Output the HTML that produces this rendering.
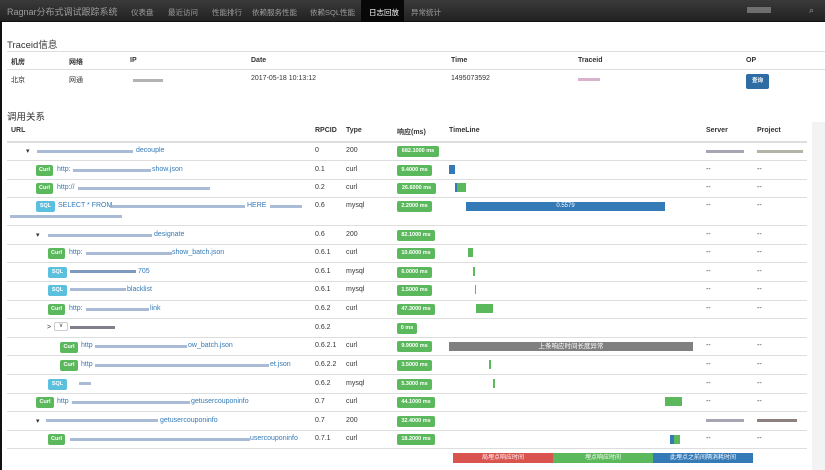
<!DOCTYPE html><html><head><meta charset="utf-8"><style>
*{margin:0;padding:0;box-sizing:border-box}
body{width:825px;height:470px;overflow:hidden;background:#fff;font-family:"Liberation Sans","Noto Sans CJK SC",sans-serif;font-size:7px;color:#333;position:relative}
.a{position:absolute;white-space:nowrap}
.nav{position:absolute;left:0;top:0;width:825px;height:22px;background:linear-gradient(#3a3a3a,#222);border-bottom:1px solid #111}
.nav .a{color:#9d9d9d;font-size:7.5px;top:7px}
.hl{position:absolute;height:1px;background:#ddd}
.b{position:absolute;color:#fff;font-weight:bold;font-size:5.5px;border-radius:2px;text-align:center;line-height:11px;height:11px}
.g{background:#5cb85c}.s{background:#5bc0de}
.bl{position:absolute;height:3px;background:#8ea4c8;opacity:.75}
.lk{color:#337ab7}
.bar{position:absolute;height:9px}
</style></head><body>
<div style="position:absolute;left:0;top:22px;width:2px;height:448px;background:#111"></div>
<div style="position:absolute;left:812px;top:122px;width:13px;height:348px;background:#f3f3f3"></div>
<div class="nav">
<div class="a" style="left:7px;top:5px;font-size:9px;color:#9d9d9d">Ragnar分布式调试跟踪系统</div>
<div class="a" style="left:131px">仪表盘</div>
<div class="a" style="left:168px">最近访问</div>
<div class="a" style="left:212px">性能排行</div>
<div class="a" style="left:252px">依赖服务性能</div>
<div class="a" style="left:310px">依赖SQL性能</div>
<div style="position:absolute;left:361px;top:0;width:43px;height:22px;background:#080808"></div>
<div class="a" style="left:369px;color:#fff">日志回放</div>
<div class="a" style="left:411px">异常统计</div>
<div style="position:absolute;left:747px;top:7px;width:24px;height:6px;background:#8a8a8a;opacity:.7"></div>
<div class="a" style="left:809px;top:5px;font-size:9px">⌕</div>
</div>

<div class="a" style="left:7px;top:37px;font-size:9.5px;color:#333">Traceid信息</div>
<div class="hl" style="left:7px;top:51px;width:818px"></div>
<div class="hl" style="left:7px;top:69px;width:818px"></div>
<div class="a" style="left:11px;top:57px;font-weight:bold">机房</div>
<div class="a" style="left:69px;top:57px;font-weight:bold">网络</div>
<div class="a" style="left:130px;top:57px;font-weight:bold">IP</div>
<div class="a" style="left:251px;top:57px;font-weight:bold">Date</div>
<div class="a" style="left:451px;top:57px;font-weight:bold">Time</div>
<div class="a" style="left:578px;top:57px;font-weight:bold">Traceid</div>
<div class="a" style="left:746px;top:57px;font-weight:bold">OP</div>
<div class="a" style="left:11px;top:75px">北京</div>
<div class="a" style="left:69px;top:75px">网通</div>
<div class="bl" style="left:133px;top:79px;width:30px;background:#999"></div>
<div class="a" style="left:251px;top:75px">2017-05-18 10:13:12</div>
<div class="a" style="left:451px;top:75px">1495073592</div>
<div class="bl" style="left:578px;top:78px;width:22px;background:#c9b"></div>
<div class="b" style="left:746px;top:74px;width:23px;height:15px;line-height:15px;background:#2e6da4">查询</div>

<div class="a" style="left:7px;top:109px;font-size:9.5px">调用关系</div>
<div class="a" style="left:11px;top:127px;font-weight:bold">URL</div>
<div class="a" style="left:315px;top:127px;font-weight:bold">RPCID</div>
<div class="a" style="left:346px;top:127px;font-weight:bold">Type</div>
<div class="a" style="left:397px;top:127px;font-weight:bold">响应(ms)</div>
<div class="a" style="left:449px;top:127px;font-weight:bold">TimeLine</div>
<div class="a" style="left:706px;top:127px;font-weight:bold">Server</div>
<div class="a" style="left:757px;top:127px;font-weight:bold">Project</div>
<div class="hl" style="left:7px;top:141px;width:800px;height:2px"></div>

<div class="hl" style="left:7px;top:160px;width:800px"></div>
<div class="hl" style="left:7px;top:179px;width:800px"></div>
<div class="hl" style="left:7px;top:197px;width:800px"></div>
<div class="hl" style="left:7px;top:225px;width:800px"></div>
<div class="hl" style="left:7px;top:244px;width:800px"></div>
<div class="hl" style="left:7px;top:262px;width:800px"></div>
<div class="hl" style="left:7px;top:281px;width:800px"></div>
<div class="hl" style="left:7px;top:300px;width:800px"></div>
<div class="hl" style="left:7px;top:318px;width:800px"></div>
<div class="hl" style="left:7px;top:337px;width:800px"></div>
<div class="hl" style="left:7px;top:355px;width:800px"></div>
<div class="hl" style="left:7px;top:374px;width:800px"></div>
<div class="hl" style="left:7px;top:393px;width:800px"></div>
<div class="hl" style="left:7px;top:411px;width:800px"></div>
<div class="hl" style="left:7px;top:430px;width:800px"></div>
<div class="hl" style="left:7px;top:448px;width:800px"></div>

<div class="a" style="left:26px;top:147px">▾</div><div class="bl" style="left:37px;top:150px;width:96px"></div><div class="a lk" style="left:136px;top:147px">decouple</div>
<div class="a" style="left:315px;top:147px">0</div><div class="a" style="left:346px;top:147px">200</div><div class="b g" style="left:397px;top:146px;width:42px">682.1000 ms</div>
<div class="bl" style="left:706px;top:150px;width:38px;background:#889"></div><div class="bl" style="left:757px;top:150px;width:46px;background:#998"></div>

<div class="b g" style="left:36px;top:165px;width:17px">Curl</div><div class="a lk" style="left:57px;top:166px">http:</div><div class="bl" style="left:73px;top:169px;width:78px"></div><div class="a lk" style="left:152px;top:166px">show.json</div>
<div class="a" style="left:315px;top:166px">0.1</div><div class="a" style="left:346px;top:166px">curl</div><div class="b g" style="left:397px;top:165px;width:35px">9.4000 ms</div>
<div class="bar" style="left:449px;top:165px;width:6px;background:#337ab7"></div>
<div class="a" style="left:706px;top:166px">--</div><div class="a" style="left:757px;top:166px">--</div>

<div class="b g" style="left:36px;top:183px;width:17px">Curl</div><div class="a lk" style="left:57px;top:184px">http://</div><div class="bl" style="left:78px;top:187px;width:132px"></div>
<div class="a" style="left:315px;top:184px">0.2</div><div class="a" style="left:346px;top:184px">curl</div><div class="b g" style="left:397px;top:183px;width:39px">26.6000 ms</div>
<div class="bar" style="left:455px;top:183px;width:2px;background:#337ab7"></div><div class="bar" style="left:457px;top:183px;width:9px;background:#5cb85c"></div>
<div class="a" style="left:706px;top:184px">--</div><div class="a" style="left:757px;top:184px">--</div>

<div class="b s" style="left:36px;top:201px;width:19px">SQL</div><div class="a lk" style="left:58px;top:202px">SELECT * FROM</div><div class="bl" style="left:110px;top:205px;width:135px"></div><div class="a lk" style="left:247px;top:202px">HERE</div><div class="bl" style="left:270px;top:205px;width:32px"></div>
<div class="bl" style="left:10px;top:215px;width:112px"></div>
<div class="a" style="left:315px;top:202px">0.6</div><div class="a" style="left:346px;top:202px">mysql</div><div class="b g" style="left:397px;top:201px;width:35px">2.2000 ms</div>
<div class="bar" style="left:466px;top:202px;width:199px;background:#337ab7;color:#fff;font-size:6px;text-align:center;line-height:9px">0.5579</div>
<div class="a" style="left:706px;top:202px">--</div><div class="a" style="left:757px;top:202px">--</div>

<div class="a" style="left:36px;top:231px">▾</div><div class="bl" style="left:48px;top:234px;width:104px"></div><div class="a lk" style="left:154px;top:231px">designate</div>
<div class="a" style="left:315px;top:231px">0.6</div><div class="a" style="left:346px;top:231px">200</div><div class="b g" style="left:397px;top:230px;width:38px">82.1000 ms</div>
<div class="a" style="left:706px;top:231px">--</div><div class="a" style="left:757px;top:231px">--</div>

<div class="b g" style="left:48px;top:248px;width:17px">Curl</div><div class="a lk" style="left:69px;top:249px">http:</div><div class="bl" style="left:86px;top:252px;width:86px"></div><div class="a lk" style="left:172px;top:249px">show_batch.json</div>
<div class="a" style="left:315px;top:249px">0.6.1</div><div class="a" style="left:346px;top:249px">curl</div><div class="b g" style="left:397px;top:248px;width:38px">10.6000 ms</div>
<div class="bar" style="left:468px;top:248px;width:5px;background:#5cb85c"></div>
<div class="a" style="left:706px;top:249px">--</div><div class="a" style="left:757px;top:249px">--</div>

<div class="b s" style="left:48px;top:267px;width:19px">SQL</div><div class="bl" style="left:70px;top:270px;width:66px;background:#5577aa"></div><div class="a lk" style="left:138px;top:268px">705</div>
<div class="a" style="left:315px;top:268px">0.6.1</div><div class="a" style="left:346px;top:268px">mysql</div><div class="b g" style="left:397px;top:267px;width:35px">6.0000 ms</div>
<div class="bar" style="left:473px;top:267px;width:2px;background:#5cb85c"></div>
<div class="a" style="left:706px;top:268px">--</div><div class="a" style="left:757px;top:268px">--</div>

<div class="b s" style="left:48px;top:285px;width:19px">SQL</div><div class="bl" style="left:70px;top:288px;width:56px"></div><div class="a lk" style="left:127px;top:286px">blacklist</div>
<div class="a" style="left:315px;top:286px">0.6.1</div><div class="a" style="left:346px;top:286px">mysql</div><div class="b g" style="left:397px;top:285px;width:35px">1.5000 ms</div>
<div class="bar" style="left:475px;top:285px;width:1px;background:#5cb85c"></div>
<div class="a" style="left:706px;top:286px">--</div><div class="a" style="left:757px;top:286px">--</div>

<div class="b g" style="left:48px;top:304px;width:17px">Curl</div><div class="a lk" style="left:69px;top:305px">http:</div><div class="bl" style="left:86px;top:308px;width:63px"></div><div class="a lk" style="left:150px;top:305px">link</div>
<div class="a" style="left:315px;top:305px">0.6.2</div><div class="a" style="left:346px;top:305px">curl</div><div class="b g" style="left:397px;top:304px;width:38px">47.3000 ms</div>
<div class="bar" style="left:476px;top:304px;width:17px;background:#5cb85c"></div>
<div class="a" style="left:706px;top:305px">--</div><div class="a" style="left:757px;top:305px">--</div>

<div class="a" style="left:47px;top:324px">&gt;</div><div style="position:absolute;left:54px;top:322px;width:14px;height:9px;border:1px solid #ccc;border-radius:2px;font-size:6px;text-align:center;line-height:7px">v</div><div class="bl" style="left:70px;top:326px;width:45px;background:#556"></div>
<div class="a" style="left:315px;top:324px">0.6.2</div><div class="b g" style="left:397px;top:323px;width:20px">0 ms</div>

<div class="b g" style="left:60px;top:342px;width:18px">Curl</div><div class="a lk" style="left:81px;top:342px">http</div><div class="bl" style="left:95px;top:345px;width:92px"></div><div class="a lk" style="left:188px;top:342px">ow_batch.json</div>
<div class="a" style="left:315px;top:342px">0.6.2.1</div><div class="a" style="left:346px;top:342px">curl</div><div class="b g" style="left:397px;top:341px;width:35px">9.9000 ms</div>
<div class="bar" style="left:449px;top:342px;width:244px;background:#808080;color:#fff;font-size:6.5px;text-align:center;line-height:9px">上条响应时间长度异常</div>
<div class="a" style="left:706px;top:342px">--</div><div class="a" style="left:757px;top:342px">--</div>

<div class="b g" style="left:60px;top:360px;width:18px">Curl</div><div class="a lk" style="left:81px;top:361px">http</div><div class="bl" style="left:95px;top:364px;width:174px"></div><div class="a lk" style="left:270px;top:361px">et.json</div>
<div class="a" style="left:315px;top:361px">0.6.2.2</div><div class="a" style="left:346px;top:361px">curl</div><div class="b g" style="left:397px;top:360px;width:35px">3.5000 ms</div>
<div class="bar" style="left:489px;top:360px;width:2px;background:#5cb85c"></div>
<div class="a" style="left:706px;top:361px">--</div><div class="a" style="left:757px;top:361px">--</div>

<div class="b s" style="left:48px;top:379px;width:19px">SQL</div><div class="bl" style="left:79px;top:382px;width:12px"></div>
<div class="a" style="left:315px;top:380px">0.6.2</div><div class="a" style="left:346px;top:380px">mysql</div><div class="b g" style="left:397px;top:379px;width:35px">5.3000 ms</div>
<div class="bar" style="left:493px;top:379px;width:2px;background:#5cb85c"></div>
<div class="a" style="left:706px;top:380px">--</div><div class="a" style="left:757px;top:380px">--</div>

<div class="b g" style="left:36px;top:397px;width:18px">Curl</div><div class="a lk" style="left:57px;top:398px">http</div><div class="bl" style="left:72px;top:401px;width:118px"></div><div class="a lk" style="left:191px;top:398px">getusercouponinfo</div>
<div class="a" style="left:315px;top:398px">0.7</div><div class="a" style="left:346px;top:398px">curl</div><div class="b g" style="left:397px;top:397px;width:38px">44.1000 ms</div>
<div class="bar" style="left:665px;top:397px;width:17px;background:#5cb85c"></div>
<div class="a" style="left:706px;top:398px">--</div><div class="a" style="left:757px;top:398px">--</div>

<div class="a" style="left:36px;top:417px">▾</div><div class="bl" style="left:46px;top:419px;width:112px"></div><div class="a lk" style="left:160px;top:417px">getusercouponinfo</div>
<div class="a" style="left:315px;top:417px">0.7</div><div class="a" style="left:346px;top:417px">200</div><div class="b g" style="left:397px;top:416px;width:38px">32.4000 ms</div>
<div class="bl" style="left:706px;top:419px;width:38px;background:#889"></div><div class="bl" style="left:757px;top:419px;width:40px;background:#655"></div>

<div class="b g" style="left:48px;top:434px;width:17px">Curl</div><div class="bl" style="left:70px;top:438px;width:180px"></div><div class="a lk" style="left:250px;top:435px">usercouponinfo</div>
<div class="a" style="left:315px;top:435px">0.7.1</div><div class="a" style="left:346px;top:435px">curl</div><div class="b g" style="left:397px;top:434px;width:38px">18.2000 ms</div>
<div class="bar" style="left:670px;top:435px;width:4px;background:#337ab7"></div><div class="bar" style="left:674px;top:435px;width:6px;background:#5cb85c"></div>
<div class="a" style="left:706px;top:435px">--</div><div class="a" style="left:757px;top:435px">--</div>

<div class="bar" style="left:453px;top:453px;width:100px;height:10px;background:#d9534f;color:#fff;font-size:6px;text-align:center;line-height:10px">局埋点响应时间</div>
<div class="bar" style="left:553px;top:453px;width:100px;height:10px;background:#5cb85c;color:#fff;font-size:6px;text-align:center;line-height:10px">埋点响应时间</div>
<div class="bar" style="left:653px;top:453px;width:100px;height:10px;background:#337ab7;color:#fff;font-size:6px;text-align:center;line-height:10px">此埋点之前间隔消耗时间</div>
</body></html>
